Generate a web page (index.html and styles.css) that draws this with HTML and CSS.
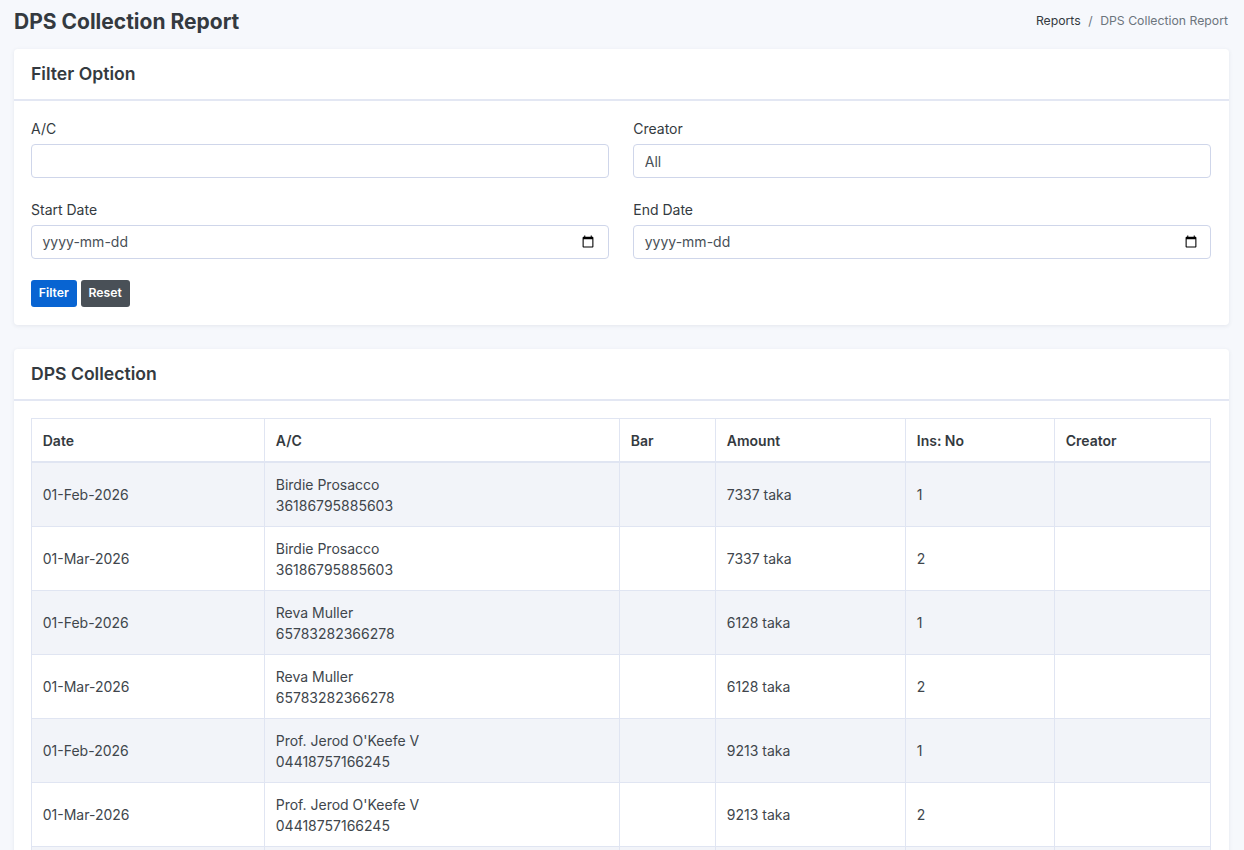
FILE: index.html
```html
<!DOCTYPE html>
<html lang="en-CA">
<head>
<meta charset="utf-8">
<title>DPS Collection Report</title>
<link rel="stylesheet" href="styles.css">
</head>
<body>
<main class="page">
  <header class="page-head">
    <h1 class="page-title">DPS Collection Report</h1>
    <nav class="crumbs"><a class="crumb-link">Reports</a><span class="crumb-sep">/</span><span class="crumb-current">DPS Collection Report</span></nav>
  </header>

  <section class="card">
    <div class="card-head"><h2 class="card-title">Filter Option</h2></div>
    <form class="card-body filter-body">
      <div class="filter-grid">
        <div class="field"><label class="field-label">A/C</label><input class="control" type="text"></div>
        <div class="field"><label class="field-label">Creator</label><input class="control" type="text" value="All"></div>
        <div class="field"><label class="field-label">Start Date</label><div class="date-wrap"><input class="control date-input" type="date"><span class="date-mask">yyyy-mm-dd</span></div></div>
        <div class="field"><label class="field-label">End Date</label><div class="date-wrap"><input class="control date-input" type="date"><span class="date-mask">yyyy-mm-dd</span></div></div>
      </div>
      <div class="actions">
        <button type="button" class="btn btn-primary">Filter</button>
        <button type="button" class="btn btn-dark">Reset</button>
      </div>
    </form>
  </section>

  <section class="card">
    <div class="card-head"><h2 class="card-title">DPS Collection</h2></div>
    <div class="card-body">
      <table class="report">
        <thead>
          <tr><th class="c-date">Date</th><th class="c-ac">A/C</th><th class="c-bar">Bar</th><th class="c-amount">Amount</th><th class="c-ins">Ins: No</th><th class="c-creator">Creator</th></tr>
        </thead>
        <tbody>
          <tr><td>01-Feb-2026</td><td class="ac-cell">Birdie Prosacco<br>36186795885603</td><td></td><td>7337 taka</td><td>1</td><td></td></tr>
          <tr><td>01-Mar-2026</td><td class="ac-cell">Birdie Prosacco<br>36186795885603</td><td></td><td>7337 taka</td><td>2</td><td></td></tr>
          <tr><td>01-Feb-2026</td><td class="ac-cell">Reva Muller<br>65783282366278</td><td></td><td>6128 taka</td><td>1</td><td></td></tr>
          <tr><td>01-Mar-2026</td><td class="ac-cell">Reva Muller<br>65783282366278</td><td></td><td>6128 taka</td><td>2</td><td></td></tr>
          <tr><td>01-Feb-2026</td><td class="ac-cell">Prof. Jerod O'Keefe V<br>04418757166245</td><td></td><td>9213 taka</td><td>1</td><td></td></tr>
          <tr><td>01-Mar-2026</td><td class="ac-cell">Prof. Jerod O'Keefe V<br>04418757166245</td><td></td><td>9213 taka</td><td>2</td><td></td></tr>
          <tr><td>&nbsp;</td><td class="ac-cell">&nbsp;<br>&nbsp;</td><td></td><td></td><td></td><td></td></tr>
        </tbody>
      </table>
    </div>
  </section>
</main>
</body>
</html>
```
FILE: styles.css
```css
* { box-sizing: border-box; }
html, body { margin: 0; padding: 0; }
body {
  background: #f6f8fc;
  color: #343a40;
  font-family: Inter, "Liberation Sans", sans-serif;
  font-size: 14px;
  line-height: 21px;
  overflow: hidden;
  height: 850px;
}
.page { padding: 0 15px 0 14px; }
.page-head {
  display: flex;
  justify-content: space-between;
  align-items: center;
  height: 49px;
  padding-bottom: 5px;
}
.page-title { margin: 0; font-size: 21px; line-height: 24px; font-weight: 700; color: #343a40; }
.crumbs { display: flex; font-size: 12.25px; line-height: 18px; margin: 0 1px 3px 0; }
.crumb-link { color: #343a40; }
.crumb-sep { color: #6c757d; padding: 0 7.5px; }
.crumb-current { color: #6c757d; }
.card {
  background: #fff;
  border-radius: 4px;
  box-shadow: 0 1px 4px rgba(40, 50, 90, 0.09);
  margin-bottom: 24px;
}
.card-head {
  height: 52px;
  padding: 0 17px;
  display: flex;
  align-items: center;
  border-bottom: 2px solid #e3e7f3;
}
.card-title { margin: 0; font-size: 17.6px; line-height: 24px; font-weight: 600; color: #343a40; }
.card-body { padding: 17px; }
.filter-body { padding-bottom: 18px; }
.filter-grid { display: grid; grid-template-columns: 577.75px 577.75px; column-gap: 24.5px; row-gap: 21px; }
.field { display: flex; flex-direction: column; }
.field-label { line-height: 21px; margin-bottom: 5px; font-weight: 400; color: #343a40; }
.control {
  display: block;
  height: 34px;
  width: 100%;
  border: 1px solid #cfd6ea;
  border-radius: 4px;
  padding: 0 10.5px;
  background: #fff;
  color: #495057;
  font-family: Inter, "Liberation Sans", sans-serif;
  font-size: 14px;
  outline: none;
}
.date-wrap { position: relative; }
.date-input::-webkit-datetime-edit { color: transparent; }
.date-mask {
  position: absolute;
  left: 11.5px;
  top: 6px;
  color: #495057;
  pointer-events: none;
}
.actions { display: flex; gap: 4px; margin-top: 21px; }
.btn {
  height: 27px;
  padding: 0 6.8px 2px;
  border: 1px solid transparent;
  border-radius: 3px;
  color: #fff;
  font-family: Inter, "Liberation Sans", sans-serif;
  font-size: 12.25px;
  font-weight: 600;
}
.btn-primary { background: #0864d2; }
.btn-dark { background: #495057; }
.report {
  width: 1179px;
  table-layout: fixed;
  border-collapse: collapse;
  color: #40464c;
}
.report th, .report td {
  border: 1px solid #e0e5f2;
  padding: 10.5px 10.5px 10.5px 10.75px;
  text-align: left;
  vertical-align: middle;
}
.report .ac-cell { padding-top: 11px; padding-bottom: 10px; }
.report th { font-weight: 600; color: #343a40; border-bottom-width: 2px; }
.report tbody tr:nth-child(odd) { background: #f2f4f9; }
.c-date { width: 233px; }
.c-ac { width: 355px; }
.c-bar { width: 96px; }
.c-amount { width: 190px; }
.c-ins { width: 149px; }
.c-creator { width: 156px; }
```
